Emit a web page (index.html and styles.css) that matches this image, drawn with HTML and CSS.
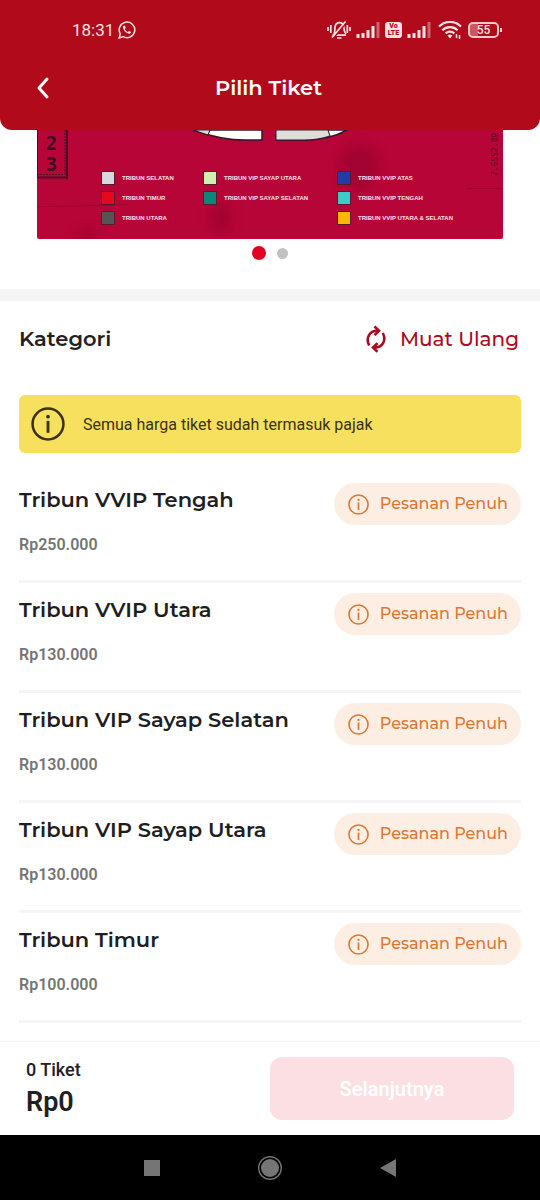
FILE: index.html
```html
<!DOCTYPE html>
<html lang="id">
<head>
<meta charset="utf-8">
<meta name="viewport" content="width=device-width, initial-scale=1">
<title>Pilih Tiket</title>
<link rel="stylesheet" href="styles.css">
</head>
<body>
<svg class="defs" aria-hidden="true">
  <symbol id="info" viewBox="0 0 24 24">
    <circle cx="12" cy="12" r="10.9" fill="none" stroke="currentColor" stroke-width="1.8"/>
    <circle cx="12" cy="6.8" r="1.3" fill="currentColor"/>
    <path d="M12 9.8v8.4" stroke="currentColor" stroke-width="2"/>
  </symbol>
  <symbol id="signal" viewBox="0 0 24 16">
    <path d="M2 16v-4M7 16v-5M12 16V8M17 16V4" stroke="currentColor" stroke-width="3"/>
    <path d="M22 16V0" stroke="currentColor" stroke-width="3" opacity=".4"/>
  </symbol>
</svg>
<div class="screen">
  <header class="header">
    <div class="status">
      <div class="status-left">
        <span>18:31</span>
        <svg width="18" height="18" viewBox="0 0 18 18" fill="none" stroke="currentColor" stroke-width="1.5"><path d="M1.2 16.8l1.1-3.9A7.8 7.8 0 1 1 5.2 15.700z"/><path d="M6 4.600c-1.300.8-1.200 2.400-.2 4.100 1.200 2.100 2.800 3.400 4.600 3.900 1.500.3 2.500-.5 2.600-1.700l-2-1-1.200 1.100C8.500 10.500 7.300 9.300 6.900 8.100l.9-1.100-.8-2.200z" fill="currentColor" stroke="none"/></svg>
      </div>
      <div class="status-right">
        <svg width="24" height="20" viewBox="0 0 24 20" fill="none" stroke="currentColor" stroke-width="1.700"><path d="M5.500 15.200h13.500M7 14c1.200-1.600.7-4.600 1-7 .5-2.800 2-4.300 4.500-4.300 2.700 0 4 1.800 4.300 4.300.3 2.600.2 5 2.200 7"/><path d="M10 18h4.500M1 7v4M3.800 5v8M20.300 5v8M23 7v4"/><path d="M6.300 18.300L19.800 2.300" stroke="#b10a1b"/><path d="M5 17.500L18.500 1.500"/></svg>
        <svg width="24" height="16"><use href="#signal"/></svg>
        <span class="volte"><span>Vo</span><span>LTE</span></span>
        <svg width="24" height="16"><use href="#signal"/></svg>
        <svg class="wifi" width="24" height="18" viewBox="0 0 24 18" fill="none" stroke="currentColor" stroke-width="2.300"><path d="M1 5.500a15.500 15.500 0 0 1 22 0M4.300 9.200a11 11 0 0 1 15.400 0M7.700 12.500a6 6 0 0 1 8.600 0"/><path d="M9.500 14.500L12 17.500l2.500-3a4 4 0 0 0-5 0z" fill="currentColor" stroke="none"/><path d="M18.500 13v4M21.500 14v4" stroke-width="1.500"/></svg>
        <span class="battery">55</span>
      </div>
    </div>
    <div class="titlebar">
      <button class="back" aria-label="Kembali"><svg width="16" height="24" viewBox="0 0 16 24" fill="none" stroke="currentColor" stroke-width="3" stroke-linecap="round" stroke-linejoin="round"><path d="M13 3L5 12l8 9"/></svg></button>
      <h1>Pilih Tiket</h1>
    </div>
  </header>

  <main class="content">
    <section class="poster">
      <svg class="poster-art" viewBox="0 0 466 108" preserveAspectRatio="none" aria-hidden="true">
        <defs><filter id="soft" x="-50%" y="-50%" width="200%" height="200%"><feGaussianBlur stdDeviation="6"/></filter></defs>
        <g fill="#790027" opacity=".35" filter="url(#soft)"><ellipse cx="322" cy="36" rx="20" ry="22"/><ellipse cx="184" cy="86" rx="11" ry="16"/><ellipse cx="50" cy="104" rx="12" ry="6"/></g>
        <path d="M0 76l90-2M430 58h36" stroke="#8c0029" opacity=".5" fill="none"/>
        <path d="M0 47h30M30 0v49M0 0v47" stroke="#4b0c25" stroke-width="2" fill="none"/>
        <path d="M0 44h26M28 0v44" stroke="#4b0c25" stroke-dasharray="2 1" fill="none"/>
        <path d="M156 0Q184 10 208 10h17V0zM239 0v10h28Q292 10 310 0z" fill="#fff" stroke="#35162a" stroke-width="1.500"/>
        <path d="M156 0l15 5 2-5zM239 0v10h28q14 0 26-4l-2-6z" fill="#ddd" stroke="#35162a"/>
      </svg>
      <div class="poster-number"><span>2</span><span>3</span></div>
      <div class="legend">
        <ul>
          <li><i class="swatch silver"></i>TRIBUN SELATAN</li>
          <li><i class="swatch red"></i>TRIBUN TIMUR</li>
          <li><i class="swatch gray"></i>TRIBUN UTARA</li>
        </ul>
        <ul>
          <li><i class="swatch lime"></i>TRIBUN VIP SAYAP UTARA</li>
          <li><i class="swatch teal"></i>TRIBUN VIP SAYAP SELATAN</li>
        </ul>
        <ul>
          <li><i class="swatch blue"></i>TRIBUN VVIP ATAS</li>
          <li><i class="swatch cyan"></i>TRIBUN VVIP TENGAH</li>
          <li><i class="swatch amber"></i>TRIBUN VVIP UTARA &amp; SELATAN</li>
        </ul>
      </div>
      <div class="serial">7.5552.89</div>
    </section>
    <div class="dots"><span class="dot active"></span><span class="dot"></span></div>

    <section class="category">
      <div class="category-head">
        <h2>Kategori</h2>
        <button class="reload">
          <svg width="20" height="28" viewBox="0 0 20 28" fill="none" stroke="currentColor" stroke-width="2.600"><path d="M3.200 20.500C-.5 13.500 3 5.800 11.500 5.800M16.800 8c3.700 7 .2 14.600-8.300 14.600"/><path d="M8.500 1.500l4.500 4.300-4.500 4.300M11.500 18.300L7 22.600l4.500 4.200"/></svg>
          Muat Ulang
        </button>
      </div>
      <div class="notice"><svg width="34" height="34"><use href="#info"/></svg><p>Semua harga tiket sudah termasuk pajak</p></div>
      <ul class="tickets">
        <li><div><h3>Tribun VVIP Tengah</h3><p>Rp250.000</p></div><span class="badge"><svg width="21" height="21"><use href="#info"/></svg>Pesanan Penuh</span></li>
        <li><div><h3>Tribun VVIP Utara</h3><p>Rp130.000</p></div><span class="badge"><svg width="21" height="21"><use href="#info"/></svg>Pesanan Penuh</span></li>
        <li><div><h3>Tribun VIP Sayap Selatan</h3><p>Rp130.000</p></div><span class="badge"><svg width="21" height="21"><use href="#info"/></svg>Pesanan Penuh</span></li>
        <li><div><h3>Tribun VIP Sayap Utara</h3><p>Rp130.000</p></div><span class="badge"><svg width="21" height="21"><use href="#info"/></svg>Pesanan Penuh</span></li>
        <li><div><h3>Tribun Timur</h3><p>Rp100.000</p></div><span class="badge"><svg width="21" height="21"><use href="#info"/></svg>Pesanan Penuh</span></li>
      </ul>
    </section>
  </main>

  <footer class="checkout">
    <div class="total"><p class="count">0 Tiket</p><p class="sum">Rp0</p></div>
    <button class="next" disabled>Selanjutnya</button>
  </footer>
  <nav class="system-nav">
    <button aria-label="Aplikasi terbaru"><svg width="24" height="24" viewBox="0 0 24 24"><path d="M4 4h16v16H4z" fill="#757575"/></svg></button>
    <button aria-label="Beranda"><svg width="24" height="24" viewBox="0 0 24 24"><circle cx="12" cy="12" r="11.300" fill="none" stroke="#757575" stroke-width="1.400"/><circle cx="12" cy="12" r="9" fill="#757575"/></svg></button>
    <button aria-label="Kembali ke layar sebelumnya"><svg width="24" height="24" viewBox="0 0 24 24"><path d="M20 3v18L4 12z" fill="#757575"/></svg></button>
  </nav>
</div>
</body>
</html>
```
FILE: styles.css
```css
* { box-sizing: border-box; }
body, h1, h2, h3, p, ul { margin: 0; padding: 0; }
ul { list-style: none; }
button { font: inherit; color: inherit; border: 0; padding: 0; background: none; }
svg { display: block; flex: none; }
body { background: #fff; color: #202124; font-family: Roboto, sans-serif; }
.defs { position: absolute; width: 0; height: 0; }
.screen { min-height: 100vh; display: flex; flex-direction: column; }

.header { background: #b10a1b; color: #fff; border-radius: 0 0 12px 12px; padding: 18px 41px 26px 34px; }
.status { display: flex; justify-content: space-between; align-items: center; height: 24px; padding-left: 38px; color: #ffe3e3; font-size: 17px; }
.status-left { display: flex; align-items: center; gap: 4px; }
.status-right { display: flex; align-items: center; gap: 5px; }
.volte { display: flex; flex-direction: column; align-items: center; justify-content: center; width: 17px; height: 16px; border-radius: 3px; background: #ffe3e3; color: #b10a1b; font-size: 7px; line-height: 7px; font-weight: 900; }
.wifi { margin-left: 2px; }
.battery { position: relative; width: 31px; height: 16px; margin-left: 1px; border: 2px solid #ffc9cb; border-radius: 5px; background: linear-gradient(90deg, #cc5560 30%, #b10a1b 30%); font-size: 12px; line-height: 12px; font-weight: 500; text-align: center; }
.battery::after { content: ""; position: absolute; right: -5px; top: 4px; width: 2px; height: 4px; background: #ffc9cb; }
.titlebar { display: grid; grid-template-columns: 24px 1fr 20px; align-items: center; margin-top: 30px; height: 32px; }
.titlebar h1 { font: 600 21px/32px Montserrat, Inter, sans-serif; text-align: center; }

.content { flex: 1; }
.poster { position: relative; display: flex; justify-content: space-between; height: 109px; margin: 0 37px; background: #b80537; border-radius: 0 0 2px 2px; overflow: hidden; }
.poster-art { position: absolute; inset: 0; width: 100%; height: 100%; }
.poster-number { position: relative; display: flex; flex-direction: column; width: 29px; padding-top: 3px; text-align: center; color: #3c1024; font: 700 19px/21px "DejaVu Sans Mono", monospace; }
.legend { position: relative; display: grid; grid-template-columns: 102px 134px 1fr; flex: 1; padding: 41px 0 0 35px; }
.legend ul { display: grid; grid-auto-rows: 14px; gap: 6px; align-content: start; }
.legend li { display: flex; align-items: center; gap: 7px; white-space: nowrap; color: #ffe0e6; font: 700 6px/14px "Liberation Sans", sans-serif; }
.swatch { width: 14px; height: 14px; border: 1px solid #5e1730; }
.silver { background: #d7d7dc; }
.red { background: #e30a20; }
.gray { background: #555; }
.lime { background: #d0eeb0; }
.teal { background: #0c8777; }
.blue { background: #243ba5; }
.cyan { background: #3ccbc5; }
.amber { background: #fbb800; }
.serial { position: relative; width: 14px; height: 46px; writing-mode: vertical-rl; transform: rotate(180deg); color: #6b0c2d; font: 700 8px/14px "DejaVu Sans Mono", monospace; }
.dots { display: flex; justify-content: center; align-items: center; gap: 11px; height: 28px; margin-bottom: 22px; }
.dot { width: 11px; height: 11px; border-radius: 50%; background: #c2c2c2; }
.dot.active { width: 14px; height: 14px; background: #e00423; }

.category { border-top: 12px solid #f4f4f4; padding: 22px 19px 0; }
.category-head { display: flex; justify-content: space-between; align-items: center; height: 32px; padding-right: 2px; font: 600 21px/32px Montserrat, Inter, sans-serif; }
.category-head h2, .tickets h3 { font: inherit; }
.reload { display: flex; align-items: center; gap: 14px; color: #ad0a20; font-size: 20px; font-weight: 500; }
.notice { display: flex; align-items: center; gap: 18px; height: 58px; margin: 40px 0 20px; padding: 0 12px; background: #f7e05e; border-radius: 6px; color: #3b3213; font-size: 16px; }
.tickets li { display: flex; justify-content: space-between; align-items: flex-start; padding: 10px 0 23px; border-bottom: 3px solid #f5f5f5; }
.tickets h3 { font: 600 21px/34px Montserrat, Inter, sans-serif; color: #1e1e20; }
.tickets p { margin-top: 16px; color: #757575; font-size: 16px; line-height: 24px; font-weight: 600; }
.badge { display: flex; align-items: center; gap: 11px; height: 42px; padding: 0 13px 0 14px; border-radius: 21px; background: #fdeee3; color: #dc7730; font: 500 16px/24px Montserrat, Inter, sans-serif; }

.checkout { display: flex; justify-content: space-between; align-items: center; height: 94px; padding: 0 26px; border-top: 1px solid #f4f4f4; }
.count { font-size: 18px; line-height: 26px; font-weight: 500; }
.sum { font-size: 27px; line-height: 38px; font-weight: 600; }
.next { width: 50%; height: 63px; border-radius: 12px; background: #fbdfe2; color: #fff; font-size: 20px; font-weight: 600; }
.system-nav { display: flex; justify-content: center; align-items: center; gap: 94px; height: 65px; background: #000; }
```
